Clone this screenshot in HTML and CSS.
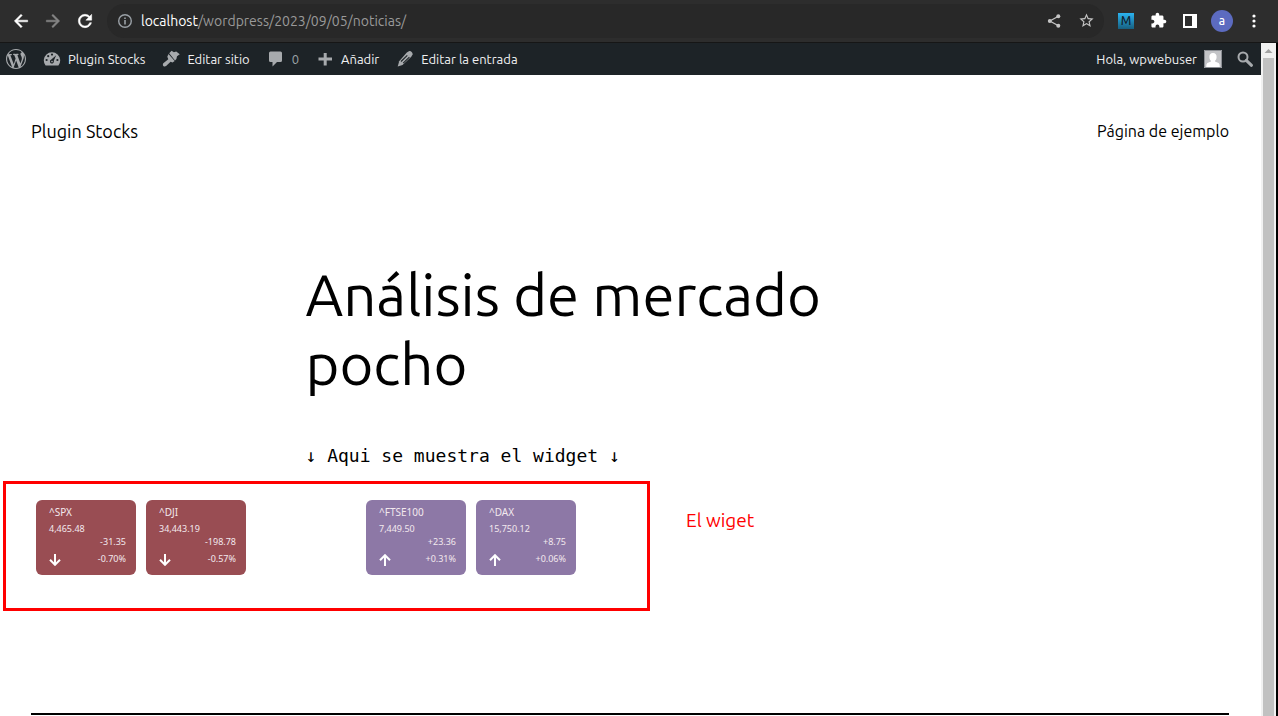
FILE: index.html
```html
<!DOCTYPE html>
<html lang="es">
<head>
<meta charset="utf-8">
<title>Análisis de mercado pocho</title>
<link rel="stylesheet" href="styles.css">
</head>
<body>
<div class="browser">
  <div class="toolbar">
    <button class="tool" aria-label="Atrás"><svg width="20" height="20" viewBox="0 0 24 24"><path d="M20 11H7.83l5.59-5.59L12 4l-8 8 8 8 1.41-1.41L7.83 13H20z" stroke="currentColor" stroke-width=".6"/></svg></button>
    <button class="tool tool-off" aria-label="Adelante"><svg width="20" height="20" viewBox="0 0 24 24"><path d="M4 11h12.17l-5.59-5.59L12 4l8 8-8 8-1.41-1.41L16.17 13H4z" stroke="currentColor" stroke-width=".6"/></svg></button>
    <button class="tool" aria-label="Recargar"><svg width="20" height="20" viewBox="0 0 24 24"><path d="M17.65 6.35C16.2 4.9 14.21 4 12 4c-4.42 0-7.99 3.58-7.99 8s3.57 8 7.99 8c3.73 0 6.84-2.55 7.73-6h-2.08c-.82 2.33-3.04 4-5.65 4-3.31 0-6-2.69-6-6s2.69-6 6-6c1.66 0 3.14.69 4.22 1.78L13 11h7V4z" stroke="currentColor" stroke-width=".6"/></svg></button>
    <div class="address">
      <svg class="dim" width="16" height="16" viewBox="0 0 16 16"><circle cx="8" cy="8" r="6.3" fill="none" stroke="currentColor" stroke-width="1.4"/><path d="M7.2 7h1.6v4.4H7.2zM7.2 4.4h1.6V6H7.2z"/></svg>
      <span class="url"><span class="host">localhost</span>/wordpress/2023/09/05/noticias/</span>
      <button class="tool tool-soft" aria-label="Compartir"><svg width="16" height="16" viewBox="0 0 16 16"><path d="M12.5 3.2 3.8 8l8.7 4.8" fill="none" stroke="currentColor" stroke-width="1.3"/><circle cx="12.3" cy="3.3" r="2"/><circle cx="3.8" cy="8" r="2"/><circle cx="12.3" cy="12.7" r="2"/></svg></button>
      <button class="tool tool-soft" aria-label="Marcador"><svg width="17" height="17" viewBox="0 0 24 24"><path d="M22 9.24l-7.19-.62L12 2 9.19 8.63 2 9.24l5.46 4.73L5.82 21 12 17.27 18.18 21l-1.63-7.03L22 9.24zM12 15.4l-3.76 2.27 1-4.28-3.32-2.88 4.38-.38L12 6.1l1.71 4.04 4.38.38-3.32 2.88 1 4.28L12 15.4z"/></svg></button>
    </div>
    <button class="tool" aria-label="Extensión M"><span class="ext">M</span></button>
    <button class="tool" aria-label="Extensiones"><svg width="17" height="17" viewBox="0 0 24 24"><path d="M20.5 11H19V7c0-1.1-.9-2-2-2h-4V3.5C13 2.12 11.88 1 10.5 1S8 2.12 8 3.5V5H4c-1.1 0-1.99.9-1.99 2v3.8H3.5c1.49 0 2.7 1.21 2.7 2.7s-1.21 2.7-2.7 2.7H2V20c0 1.1.9 2 2 2h3.8v-1.5c0-1.49 1.21-2.7 2.7-2.7s2.7 1.21 2.7 2.7V22H17c1.1 0 2-.9 2-2v-4h1.5c1.38 0 2.5-1.12 2.5-2.5S21.88 11 20.5 11z"/></svg></button>
    <button class="tool" aria-label="Panel lateral"><svg width="14" height="14" viewBox="0 0 14 14"><path d="M0 0h14v14H0zM2 2v10h7V2z" fill-rule="evenodd"/></svg></button>
    <button class="tool" aria-label="Perfil"><span class="profile">a</span></button>
    <button class="tool" aria-label="Menú"><svg width="16" height="16" viewBox="0 0 16 16"><circle cx="8" cy="3" r="1.6"/><circle cx="8" cy="8" r="1.6"/><circle cx="8" cy="13" r="1.6"/></svg></button>
  </div>

  <div class="viewport">
    <div class="page">
      <nav class="adminbar">
        <a href="#" aria-label="WordPress"><svg width="20" height="20" viewBox="0 0 20 20"><path d="M20 10c0-5.51-4.49-10-10-10C4.48 0 0 4.49 0 10c0 5.52 4.48 10 10 10 5.51 0 10-4.48 10-10zM7.78 15.37L4.37 6.22c.55-.02 1.17-.08 1.17-.08.5-.06.44-1.13-.06-1.11 0 0-1.45.11-2.37.11-.18 0-.37 0-.58-.01C4.12 2.69 6.87 1.11 10 1.11c2.33 0 4.45.87 6.05 2.34-.68-.11-1.65.39-1.65 1.58 0 .74.45 1.36.9 2.1.35.61.55 1.36.55 2.46 0 1.49-1.4 5-1.4 5l-3.03-8.37c.54-.02.82-.17.82-.17.5-.05.44-1.25-.06-1.22 0 0-1.44.12-2.38.12-.87 0-2.33-.12-2.33-.12-.5-.03-.56 1.2-.06 1.22l.92.08 1.26 3.41zM17.41 10c.24-.64.74-1.87.43-4.25.7 1.29 1.05 2.71 1.05 4.25 0 3.29-1.73 6.24-4.4 7.78.97-2.59 1.94-5.2 2.92-7.78zM6.1 18.09C3.12 16.65 1.11 13.53 1.11 10c0-1.3.23-2.48.72-3.59C3.25 10.3 4.67 14.2 6.1 18.09zm4.03-6.63l2.58 6.98c-.86.29-1.76.45-2.71.45-.79 0-1.57-.11-2.29-.33.81-2.38 1.62-4.74 2.42-7.1z"/></svg></a>
        <a href="#"><svg width="18" height="18" viewBox="0 0 18 18"><path d="M2.6 15.6A8.2 8.2 0 1 1 15.4 15.6Z"/><g fill="#1d2327"><circle cx="9" cy="4.6" r="1.1"/><circle cx="5.2" cy="6.2" r="1.1"/><circle cx="3.6" cy="10" r="1.1"/><circle cx="14.4" cy="10" r="1.1"/><path d="m13.2 5.2-2.4 5.6a2 2 0 1 1-2.5-1.2z"/></g><circle cx="9" cy="11.6" r=".8"/></svg>Plugin Stocks</a>
        <a href="#"><svg width="18" height="18" viewBox="0 0 18 18"><path d="M7.200 3.200 9.600.8l2.300 1.400 2.300-.8 3.600 2.800-2.800 2.100-.6 2.600-1.400 1.500z"/><path d="m6.500 3.900 6.200 7.100-2.200 1.500-1.900-.7-4.500 4.300c-2.100 1.400-4.200-.7-2.800-2.800l5-4-1-2.600z"/></svg>Editar sitio</a>
        <a href="#" class="quiet"><svg width="18" height="18" viewBox="0 0 18 18"><path d="M3.500 1.500h10q1.500 0 1.500 1.500v7.500q0 1.500-1.500 1.500H10l-4.500 4.500V12h-2Q2 12 2 10.500V3q0-1.500 1.500-1.500z"/></svg>0</a>
        <a href="#"><svg width="18" height="18" viewBox="0 0 18 18"><path d="M7.700 3h3v4.600H16v3h-5.300v5h-3v-5H2.500v-3h5.200z"/></svg>Añadir</a>
        <a href="#"><svg width="18" height="18" viewBox="0 0 18 18"><path d="m10.800 2.600 2.500-1.500q1.200-.3 2.400 1t.9 2.300l-1.500 2.500-8.600 8.100-4.800 1.500 1.500-5.300z"/><path d="m5 11.500 6.300-6.200M7.200 13.200l6.200-6.100" fill="none" stroke="#1d2327" stroke-width="1.100"/></svg>Editar la entrada</a>
        <a href="#" class="account">Hola, wpwebuser<svg class="avatar" width="18" height="18" viewBox="0 0 18 18"><path fill="#c3c4c7" d="M0 0h18v18H0z"/><path fill="#fff" d="M9 3c2.500 0 3.800 1.700 3.600 4.200-.1 1.700-.8 2.800-1.600 3.500v.8l3.600 1.500q1.200.7 1.200 4H2.200q0-3.300 1.200-4L7 11.500v-.8C6.100 10 5.500 8.900 5.400 7.200 5.200 4.700 6.500 3 9 3z"/><path fill="none" stroke="#8c8f94" d="M.5.5h17v17H.5z"/></svg></a>
        <button class="search" aria-label="Buscar"><svg width="18" height="18" viewBox="0 0 18 18"><circle cx="7" cy="7" r="4.500" fill="none" stroke="currentColor" stroke-width="2"/><path d="m10.300 10.300 5.200 5" stroke="currentColor" stroke-width="3" stroke-linecap="round"/></svg></button>
      </nav>

      <header class="site-header">
        <a class="site-title" href="#">Plugin Stocks</a>
        <a class="site-link" href="#">Página de ejemplo</a>
      </header>

      <main>
        <div class="entry">
          <h1>Análisis de mercado pocho</h1>
          <p class="lead">↓ Aqui se muestra el widget ↓</p>
        </div>
        <section class="widget">
          <div class="group">
            <article class="card down"><h2>^SPX</h2><p>4,465.48</p><p class="change">-31.35</p><div class="foot"><svg width="12" height="12" viewBox="0 0 12 12"><path d="M6 0v10.500M1 5.800l5 5 5-5"/></svg><span>-0.70%</span></div></article>
            <article class="card down"><h2>^DJI</h2><p>34,443.19</p><p class="change">-198.78</p><div class="foot"><svg width="12" height="12" viewBox="0 0 12 12"><path d="M6 0v10.500M1 5.800l5 5 5-5"/></svg><span>-0.57%</span></div></article>
          </div>
          <div class="group">
            <article class="card up"><h2>^FTSE100</h2><p>7,449.50</p><p class="change">+23.36</p><div class="foot"><svg width="12" height="12" viewBox="0 0 12 12"><path d="M6 12V1.500M1 6.200l5-5 5 5"/></svg><span>+0.31%</span></div></article>
            <article class="card up"><h2>^DAX</h2><p>15,750.12</p><p class="change">+8.75</p><div class="foot"><svg width="12" height="12" viewBox="0 0 12 12"><path d="M6 12V1.500M1 6.200l5-5 5 5"/></svg><span>+0.06%</span></div></article>
          </div>
          <div class="marker"></div>
          <p class="note">El wiget</p>
        </section>
        <hr>
      </main>
    </div>
    <div class="scrollbar"><svg width="15" height="15" viewBox="0 0 15 15"><path d="m7.500 6 4 4h-8z"/></svg><div class="thumb"></div></div>
  </div>
</div>
</body>
</html>
```
FILE: styles.css
```css
* { box-sizing: border-box; }
body { margin: 0; background: #000; font-family: Ubuntu, "Noto Sans", sans-serif; }
h1, h2, p { margin: 0; font-weight: inherit; }
a { color: inherit; text-decoration: none; }
button { border: 0; padding: 0; background: none; color: inherit; font: inherit; }
svg { display: block; flex: none; fill: currentColor; }

.browser { display: flex; flex-direction: column; height: 100vh; overflow: hidden; }

.toolbar { display: flex; align-items: center; gap: 8px; height: 43px; flex: none; padding: 0 12px 1px 9px; background: #2d2d2d; border-bottom: 1px solid #161616; color: #fff; }
.tool { display: flex; align-items: center; justify-content: center; width: 24px; height: 24px; flex: none; }
.tool-off { color: #858585; }
.tool-soft { color: #c4c4c4; }
.address { display: flex; flex: 1; align-items: center; gap: 8px; height: 34px; margin: 0 2px; padding: 0 6px 0 10px; border-radius: 17px; background: #282828; }
.dim { color: #9aa0a6; }
.url { flex: 1; color: #9a9a9a; font-size: 14px; white-space: nowrap; }
.host { color: #fff; }
.ext { width: 16px; height: 16px; background: linear-gradient(#2bb3f0, #176080); color: #10202c; font-size: 12px; line-height: 16px; font-weight: 500; }
.profile { width: 22px; height: 22px; border-radius: 50%; background: #5c6bc0; font-size: 12px; line-height: 21px; font-weight: 500; }

.viewport { display: flex; flex: 1; min-height: 0; margin-right: 2px; }
.page { flex: 1; min-width: 0; overflow: hidden; background: #fff; color: #000; }
.scrollbar { display: flex; flex-direction: column; align-items: center; width: 15px; background: #f1f1f1; color: #a3a3a3; }
.thumb { flex: 1; width: 11px; background: #c1c1c1; }

.adminbar { display: flex; align-items: center; gap: 17px; height: 32px; padding: 0 7px 0 6px; background: #1d2327; color: #f0f0f1; font-size: 13px; white-space: nowrap; }
.adminbar a { display: flex; align-items: center; gap: 7px; }
.adminbar svg { color: #a7aaad; }
.adminbar .quiet { color: #9ca2a7; }
.adminbar .account { margin-left: auto; margin-right: -3px; }

.site-header { display: flex; align-items: center; justify-content: space-between; padding: 44px 32px 0 31px; line-height: 24px; }
.site-title { font-size: 18px; }
.site-link { font-size: 16px; }

.entry { max-width: 650px; margin: 117px auto 0; }
h1 { font-size: 58px; line-height: 69px; }
.lead { margin-top: 46px; font: 18px/24px "DejaVu Sans Mono", monospace; }

.widget { position: relative; display: flex; gap: 120px; padding: 32px 36px 0; }
.group { display: flex; gap: 10px; }
.card { width: 100px; height: 75px; padding: 5px 10px 0 13px; border-radius: 6px; color: #f3e9ee; font: 9px/14px "Noto Sans", sans-serif; }
.down { background: #994d53; }
.up { background: #8d78a6; }
.card h2 { margin-bottom: 3px; font-size: 10px; line-height: 14px; }
.change, .foot { text-align: right; }
.change { line-height: 12px; }
.foot { display: flex; align-items: flex-end; justify-content: space-between; margin-top: 4px; }
.foot svg { fill: none; stroke: #fff; stroke-width: 2; }
.marker { position: absolute; left: 3px; top: 13px; width: 647px; height: 130px; border: 3px solid #f00; }
.note { position: absolute; left: 686px; top: 40px; color: #f00; font-size: 19px; line-height: 24px; }

hr { height: 2px; margin: 138px 32px 0 31px; border: 0; background: #000; }
```
